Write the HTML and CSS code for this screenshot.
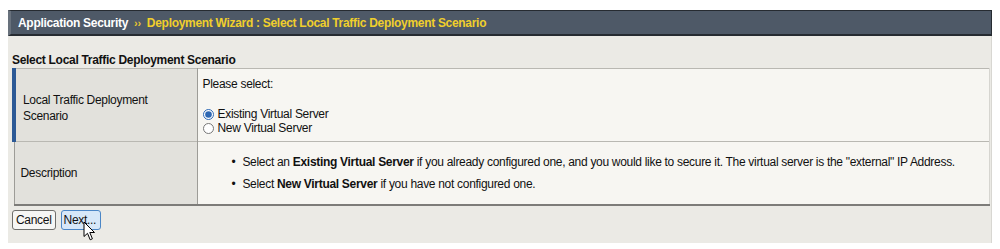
FILE: index.html
```html
<!DOCTYPE html>
<html lang="en">
<head>
  <meta charset="UTF-8">
  <title>Deployment Wizard</title>
  <link rel="stylesheet" href="styles.css">
</head>
<body>
  <div class="page">
    <div class="titlebar">
      <span class="crumb">Application Security</span>
      <span class="sep">&rsaquo;&rsaquo;</span>
      <span class="current">Deployment Wizard : Select Local Traffic Deployment Scenario</span>
    </div>

    <div class="panel">
      <div class="section-title">Select Local Traffic Deployment Scenario</div>

      <table class="props">
        <colgroup>
          <col class="col-label">
          <col>
        </colgroup>
        <tr class="row-scenario">
          <td class="label marked">Local Traffic Deployment<br>Scenario</td>
          <td class="value">
            <div class="prompt">Please select:</div>
            <label class="radio"><input type="radio" name="scenario" checked> Existing Virtual Server</label>
            <label class="radio"><input type="radio" name="scenario"> New Virtual Server</label>
          </td>
        </tr>
        <tr class="row-desc">
          <td class="label">Description</td>
          <td class="value">
            <ul class="bullets">
              <li>Select an <b>Existing Virtual Server</b> if you already configured one, and you would like to secure it. The virtual server is the "external" IP Address.</li>
              <li>Select <b>New Virtual Server</b> if you have not configured one.</li>
            </ul>
          </td>
        </tr>
      </table>

      <div class="actions">
        <button class="btn">Cancel</button>
        <button class="btn btn-focus">Next...</button>
        <svg class="cursor" width="13" height="21" viewBox="0 0 13 21">
          <path d="M1 1 L1 15.5 L4.5 12.3 L7.2 18.8 L9.4 17.8 L6.8 11.5 L11.5 11.5 Z" fill="#fff" stroke="#000" stroke-width="1" stroke-linejoin="round"/>
        </svg>
      </div>
    </div>
  </div>
</body>
</html>
```

FILE: styles.css
```css
body { margin: 0; background: #fff; font-family: "Liberation Sans", Arial, sans-serif; font-size: 12px; letter-spacing: -0.3px; color: #111; }

.page { padding: 10px 8px 6px 8px; }

.titlebar {
  height: 22px; line-height: 22px;
  padding-top: 1px;
  background: #4e5967;
  border-top: 1px solid #262b31; border-bottom: 2px solid #262b31;
  border-left: 3px solid #68717c; border-right: 1px solid #262b31;
  padding-left: 7px;
  font-weight: bold; font-size: 12px;
  white-space: nowrap;
}
.crumb { color: #fff; }
.sep { color: #e9c630; font-size: 11px; margin: 0 3px; }
.current { color: #f0cf2c; }

.panel {
  background: #ebeae5;
  height: 207px;
  padding: 13px 1px 0 4px;
  border-right: 1px solid #d8d7d2;
  box-sizing: border-box;
}
.section-title { font-weight: bold; font-size: 12px; line-height: 14px; margin-top: 4px; margin-bottom: 1px; }

.props { width: 100%; table-layout: fixed; border-collapse: collapse; border-bottom: 2px solid #7d7c79; }
.col-label { width: 183px; }
.props td { border-top: 1px solid #b9b8b2; vertical-align: middle; padding: 0; }
.props .label {
  background: #e2e1dc;
  padding-left: 6px;
  border-left: 1px solid #9d9c97;
  border-right: 1px solid #9d9c97;
  line-height: 16px;
}
.props .marked { border-left: 4px solid #2c5996; padding-left: 7px; }
.props .value { background: #f7f6f2; padding-left: 5px; border-right: 1px solid #d6d5d0; white-space: nowrap; }

.row-scenario td { height: 64px; }
.row-scenario .value { vertical-align: top; padding-top: 8px; }
.row-scenario .label { padding-top: 6px; }
.prompt { margin-bottom: 16px; line-height: 14px; }
.radio { display: flex; align-items: center; line-height: 14px; gap: 3px; }
.radio input { margin: 0 1px 0 0; width: 11px; height: 11px; accent-color: #2d67b3; }

.row-desc td { height: 62px; }
.bullets { margin: 0; padding-left: 40px; list-style: none; }
.bullets li { line-height: 14px; margin: 0 0 8px; }
.bullets li:last-child { margin-bottom: 0; }
.bullets li::before { content: "\2022"; margin-left: -11px; margin-right: 7px; }

.actions { position: relative; display: flex; gap: 5px; padding-top: 4px; }
.btn {
  font-family: "Liberation Sans", Arial, sans-serif; font-size: 12px; letter-spacing: -0.3px;
  height: 20px; padding: 0 3px;
  background: #f6f6f4; color: #111;
  border: 1px solid #6f6f6c; border-radius: 3px;
}
.btn-focus { background: #d6e7f8; border-color: #4b86c6; padding: 0 4px 0 2px; }
.cursor { position: absolute; left: 71px; top: 15px; }
```
